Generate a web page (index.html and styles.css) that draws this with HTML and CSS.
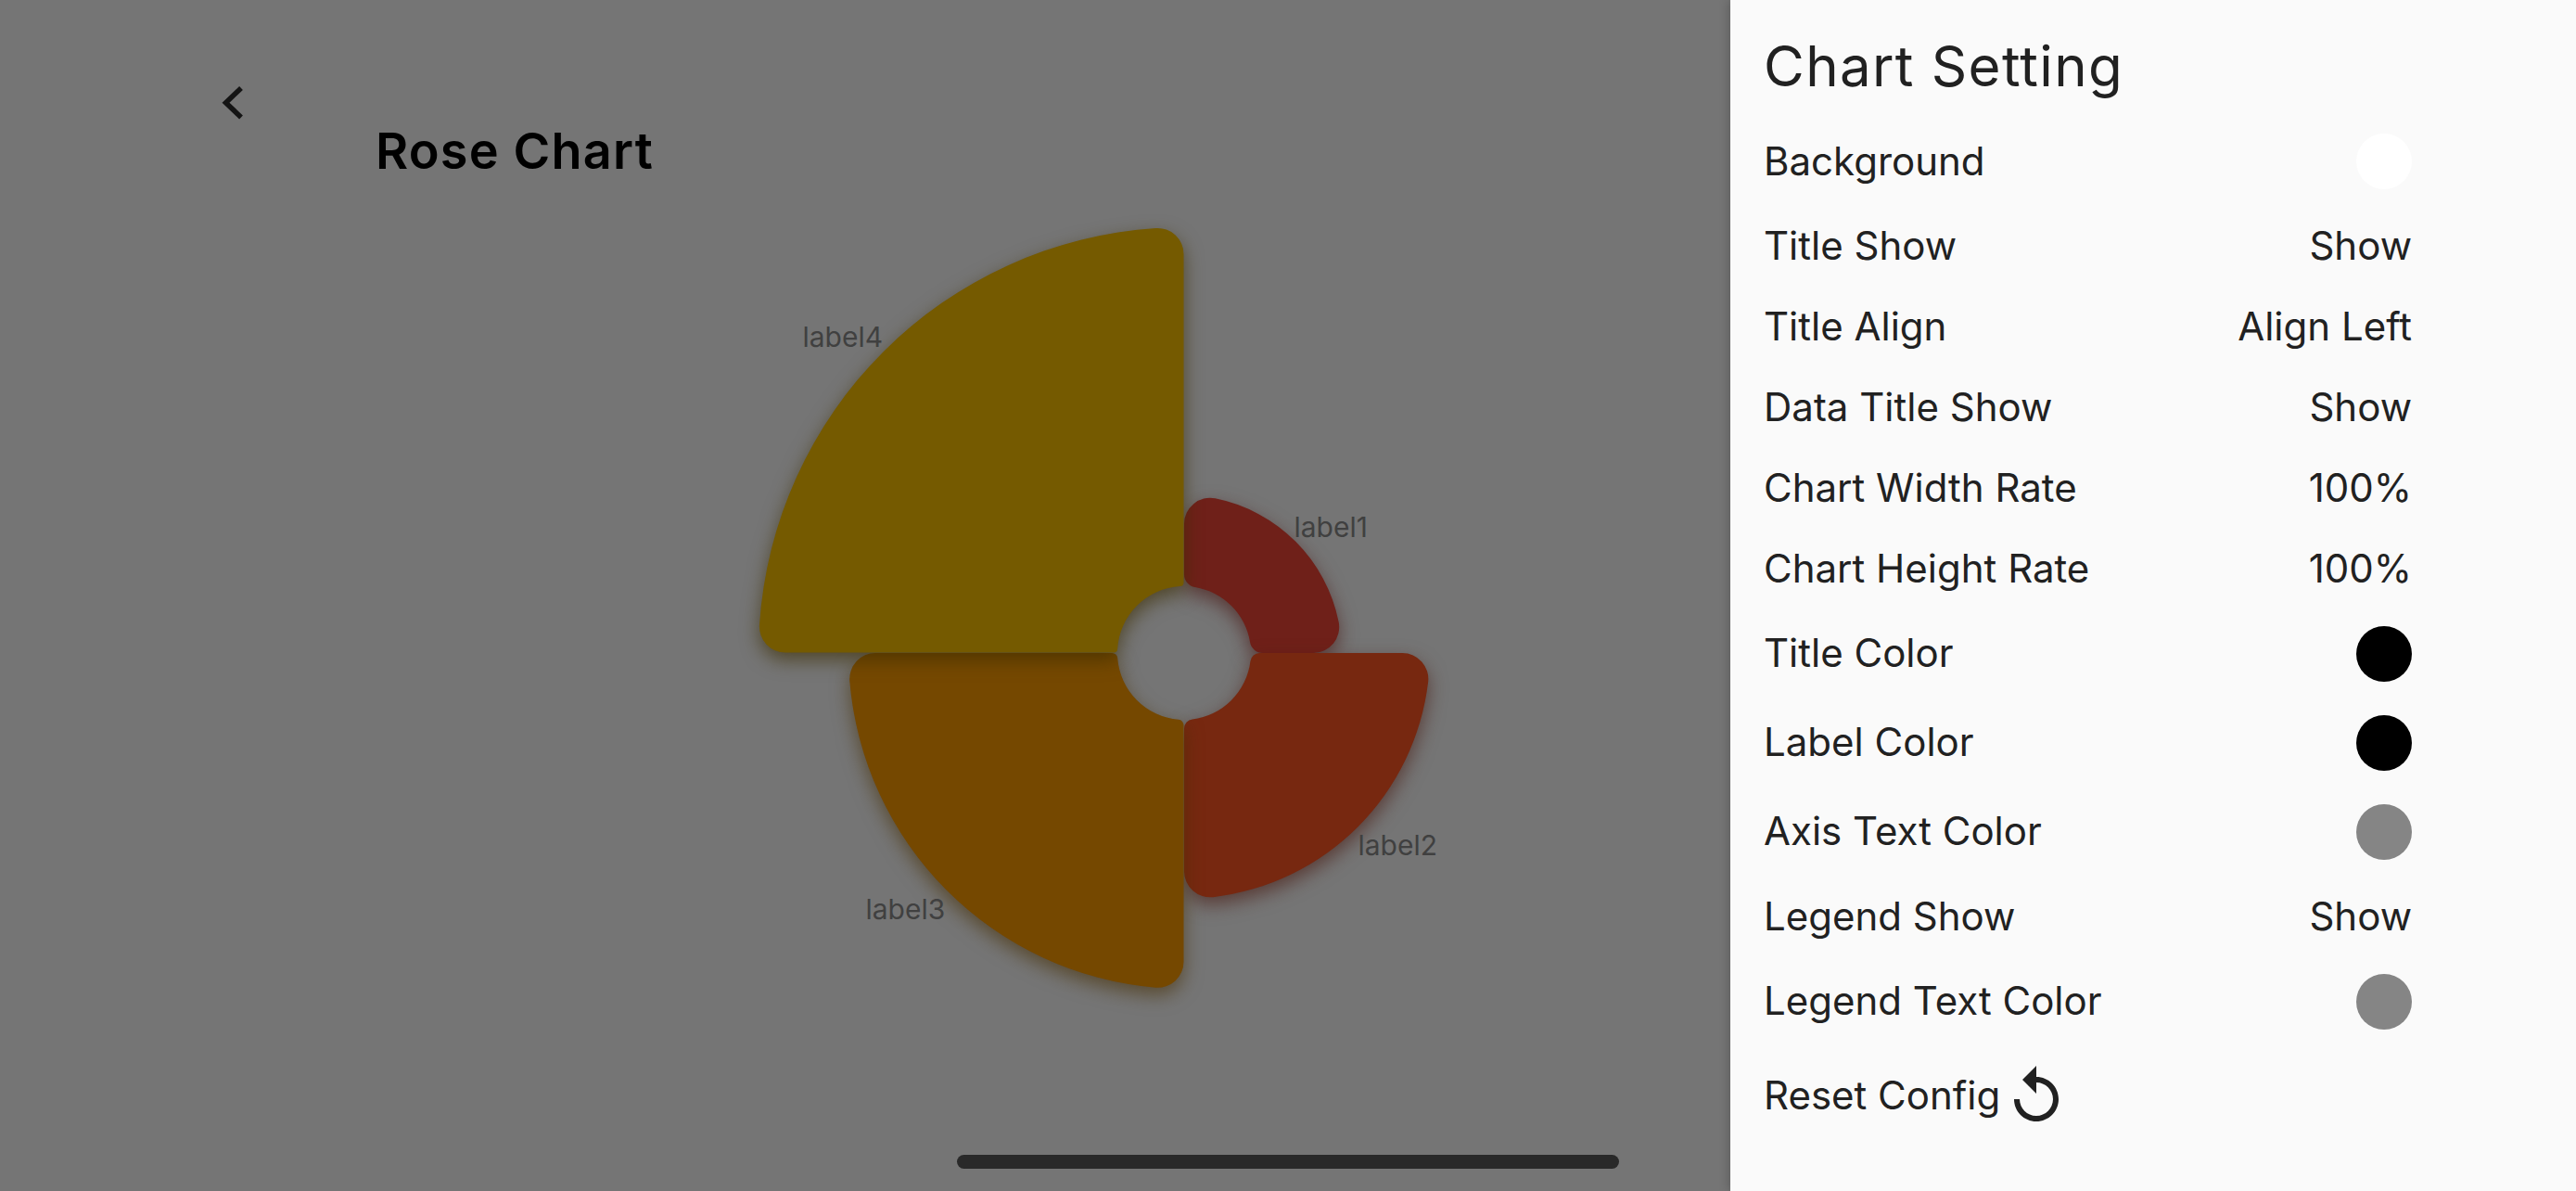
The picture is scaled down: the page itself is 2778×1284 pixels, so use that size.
FILE: index.html
```html
<!DOCTYPE html>
<html lang="en">
<head>
<meta charset="utf-8">
<title>Rose Chart</title>
<link rel="stylesheet" href="styles.css">
</head>
<body>
<div class="app">
  <main class="main">
    <svg class="back" viewBox="0 0 42 42" aria-label="Back"><path d="M31 6 L14.5 21.7 L31 37.5"/></svg>
    <h1 class="title">Rose Chart</h1>
    <svg class="chart" viewBox="-500 -500 1000 1000">
      <g class="sector sector-1"><path d="M0 -84.85 L0 -139.21 A28 28 0 0 1 33.52 -166.66 A170 170 0 0 1 166.66 -33.52 A28 28 0 0 1 139.21 0 L84.85 0 A14 14 0 0 1 71.04 -11.72 A72 72 0 0 0 11.72 -71.04 A14 14 0 0 1 0 -84.85 Z"/></g>
      <g class="sector sector-2"><path d="M0 81.39 L0 235.34 A28 28 0 0 0 31.31 263.14 A265 265 0 0 0 263.14 31.31 A28 28 0 0 0 235.34 0 L81.39 0 A10 10 0 0 0 71.46 8.78 A72 72 0 0 1 8.78 71.46 A10 10 0 0 0 0 81.39 Z"/></g>
      <g class="sector sector-3"><path d="M-0.5 77.77 L-0.5 332.82 A28 28 0 0 1 -30.85 360.72 A362 362 0 0 1 -360.72 30.35 A28 28 0 0 1 -332.82 0 L-77.77 0 A6 6 0 0 1 -71.79 5.54 A72 72 0 0 0 -6.04 71.79 A6 6 0 0 1 -0.5 77.77 Z"/></g>
      <g class="sector sector-4"><path d="M-0.5 -75.89 L-0.5 -430.09 A28 28 0 0 0 -30.32 -458.03 A459 459 0 0 0 -458.03 -30.32 A28 28 0 0 0 -430.09 -0.5 L-75.89 -0.5 A4 4 0 0 0 -71.90 -4.29 A72 72 0 0 1 -4.29 -71.90 A4 4 0 0 0 -0.5 -75.89 Z"/></g>
      <text class="label" x="118.5" y="-125">label1</text>
      <text class="label" x="187.5" y="218">label2</text>
      <text class="label" x="-343.5" y="287">label3</text>
      <text class="label" x="-411.5" y="-330">label4</text>
    </svg>
  </main>
  <aside class="panel">
    <h2 class="panel-title">Chart Setting</h2>
    <div class="row row-first"><span>Background</span><span class="swatch swatch-white"></span></div>
    <div class="row"><span>Title Show</span><span>Show</span></div>
    <div class="row"><span>Title Align</span><span>Align Left</span></div>
    <div class="row"><span>Data Title Show</span><span>Show</span></div>
    <div class="row"><span>Chart Width Rate</span><span>100%</span></div>
    <div class="row"><span>Chart Height Rate</span><span>100%</span></div>
    <div class="row row-swatch row-lift row-break"><span>Title Color</span><span class="swatch swatch-black"></span></div>
    <div class="row row-swatch row-lift"><span>Label Color</span><span class="swatch swatch-black"></span></div>
    <div class="row row-swatch row-lift"><span>Axis Text Color</span><span class="swatch swatch-grey"></span></div>
    <div class="row row-lift"><span>Legend Show</span><span>Show</span></div>
    <div class="row row-swatch row-lift"><span>Legend Text Color</span><span class="swatch swatch-grey"></span></div>
    <div class="reset">
      <span>Reset Config</span>
      <svg class="reset-icon" viewBox="0 0 24 24" aria-label="Reset"><path d="M12 5V1L7 6l5 5V7c3.31 0 6 2.69 6 6s-2.69 6-6 6-6-2.69-6-6H4c0 4.42 3.58 8 8 8s8-3.58 8-8-3.58-8-8-8z"/></svg>
    </div>
  </aside>
  <div class="home-indicator"></div>
</div>
</body>
</html>
```

FILE: styles.css
```css
* { box-sizing: border-box; }
html, body { margin: 0; padding: 0; height: 100%; }
body {
  background: #757575;
  font-family: "Inter", "Liberation Sans", sans-serif;
  overflow: hidden;
}
.app {
  position: relative;
  display: flex;
  width: 2778px;
  height: 1284px;
  overflow: hidden;
}
.main {
  flex: 1;
  min-width: 0;
  padding: 89px 0 0 229px;
  display: flex;
  flex-direction: column;
  align-items: flex-start;
}
.back {
  display: block;
  width: 42px;
  height: 42px;
  fill: none;
  stroke: #141414;
  stroke-width: 5.5;
  stroke-linejoin: miter;
}
.title {
  margin: 1px 0 10px 176px;
  font-size: 54px;
  line-height: 62px;
  font-weight: 600;
  letter-spacing: 1.2px;
  color: #000;
}
.chart {
  display: block;
  width: 1000px;
  height: 1000px;
  margin-left: 548px;
  overflow: visible;
  flex: none;
}
.sector-1 { fill: #6f2019; filter: drop-shadow(0 8px 10px rgba(70, 15, 10, .6)); }
.sector-2 { fill: #772810; filter: drop-shadow(0 8px 10px rgba(70, 20, 10, .6)); }
.sector-3 { fill: #754800; filter: drop-shadow(0 8px 10px rgba(70, 45, 0, .6)); }
.sector-4 { fill: #755a00; filter: drop-shadow(0 8px 10px rgba(60, 45, 0, .65)); }
.label {
  font-size: 30px;
  fill: #404040;
}
.panel {
  flex: none;
  width: 912px;
  padding: 35px 177px 0 36px;
  background: #fafafa;
  color: #212121;
  font-size: 42px;
  box-shadow: -2px 0 10px rgba(0, 0, 0, .2);
}
.panel-title {
  margin: 0 0 19.5px;
  font-size: 60px;
  line-height: 72px;
  font-weight: 400;
  letter-spacing: 1.3px;
}
.row {
  display: flex;
  align-items: center;
  justify-content: space-between;
  height: 87px;
}
.row-first { height: 94px; }
.row-swatch { height: 96px; }
.row-break { margin-top: 1.5px; }
.row-lift span:not(.swatch) { margin-bottom: 3px; }
.swatch {
  display: block;
  width: 60px;
  height: 60px;
  border-radius: 50%;
}
.swatch-white { background: #fff; }
.swatch-black { background: #000; }
.swatch-grey { background: #858585; }
.reset {
  display: flex;
  align-items: center;
  gap: 3px;
  height: 72px;
  margin-top: 16.5px;
}
.reset-icon {
  display: block;
  width: 72px;
  height: 72px;
  margin-top: 3px;
  fill: #212121;
}
.home-indicator {
  position: absolute;
  left: 1032px;
  top: 1245px;
  width: 714px;
  height: 15px;
  border-radius: 8px;
  background: #292929;
}
```
